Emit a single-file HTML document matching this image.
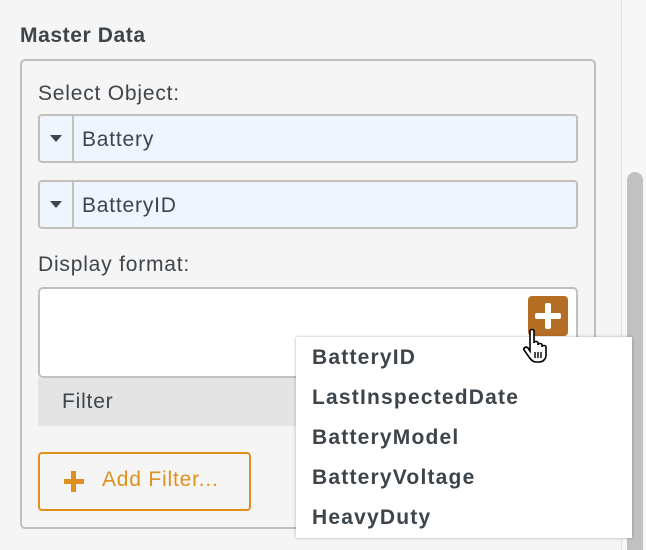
<!DOCTYPE html>
<html style="overflow:hidden;height:550px"><head><style>
body{margin:0;width:646px;height:550px;background:#f5f5f5;font-family:"Liberation Sans",sans-serif;color:#3d444a;position:relative;overflow:hidden;letter-spacing:0.8px}
.a{position:absolute}
.sel{position:absolute;left:38px;width:540px;height:49px;border:2px solid #c3c0bb;border-radius:4px;background:#eef5ff;box-sizing:border-box}
.sel .ar{position:absolute;left:0;top:0;width:32px;height:100%;border-right:2px solid #c3c0bb}
.sel .ar:after{content:"";position:absolute;left:10px;top:19px;border-left:6px solid transparent;border-right:6px solid transparent;border-top:7px solid #3d444a}
.sel span{position:absolute;left:42px;top:12px;font-size:21px}
.it{position:absolute;left:16px;font-size:21px;font-weight:bold;letter-spacing:1.2px}
</style></head><body>
<div class="a" style="left:621px;top:0;width:1px;height:550px;background:#e2e2e2"></div>
<div class="a" style="left:622px;top:0;width:24px;height:550px;background:#f7f7f7"></div>
<div class="a" style="left:627px;top:172px;width:16px;height:378px;background:#c1c1c1;border-radius:8px 8px 0 0"></div>
<div class="a" style="left:20px;top:24px;font-size:21px;font-weight:bold;letter-spacing:0.6px">Master Data</div>
<div class="a" style="left:20px;top:59px;width:576px;height:470px;border:2px solid #c3c0bb;border-radius:5px;box-sizing:border-box"></div>
<div class="a" style="left:38px;top:82px;font-size:21px">Select Object:</div>
<div class="sel" style="top:114px"><div class="ar"></div><span>Battery</span></div>
<div class="sel" style="top:180px"><div class="ar"></div><span>BatteryID</span></div>
<div class="a" style="left:38px;top:253px;font-size:21px">Display format:</div>
<div class="a" style="left:38px;top:287px;width:540px;height:91px;background:#fff;border:2px solid #c3c0bb;border-radius:5px;box-sizing:border-box"></div>
<div class="a" style="left:528px;top:296px;width:40px;height:40px;background:#b46f24;border-radius:4px"></div>
<div class="a" style="left:545px;top:303px;width:6px;height:26px;background:#fff;border-radius:2px"></div>
<div class="a" style="left:535px;top:313px;width:26px;height:6px;background:#fff;border-radius:2px"></div>
<div class="a" style="left:38px;top:378px;width:260px;height:48px;background:#e4e4e4"></div>
<div class="a" style="left:62px;top:390px;font-size:21px">Filter</div>
<div class="a" style="left:38px;top:452px;width:213px;height:59px;border:2px solid #e0901e;border-radius:4px;box-sizing:border-box"></div>
<div class="a" style="left:64px;top:479px;width:20px;height:5px;background:#e0901e"></div>
<div class="a" style="left:71px;top:471px;width:5px;height:21px;background:#e0901e"></div>
<div class="a" style="left:102px;top:468px;font-size:21px;color:#e0901e">Add Filter...</div>
<div class="a" style="left:296px;top:337px;width:336px;height:201px;background:#fff;box-shadow:0 0 3px rgba(0,0,0,.3)">
<div class="it" style="top:9px">BatteryID</div>
<div class="it" style="top:49px">LastInspectedDate</div>
<div class="it" style="top:89px">BatteryModel</div>
<div class="it" style="top:129px">BatteryVoltage</div>
<div class="it" style="top:169px">HeavyDuty</div>
</div>
<svg class="a" style="left:522px;top:328px" width="34" height="36" viewBox="0 0 34 36"><path d="M8 3c0-2 4-2 4 0v12c0-2 4-2 4 0v2c0-2 4-2 4 0v2c0-2 4-2 4 0v8c0 4-3 7-7 7h-3c-3 0-5-2-7-5l-5-7c-1-2 2-4 4-2l2 3z" fill="#fff" stroke="#000" stroke-width="1.6"/><path d="M13 24v6M16 24v6M19 24v6" stroke="#000" stroke-width="1.4"/></svg>
</body></html>
